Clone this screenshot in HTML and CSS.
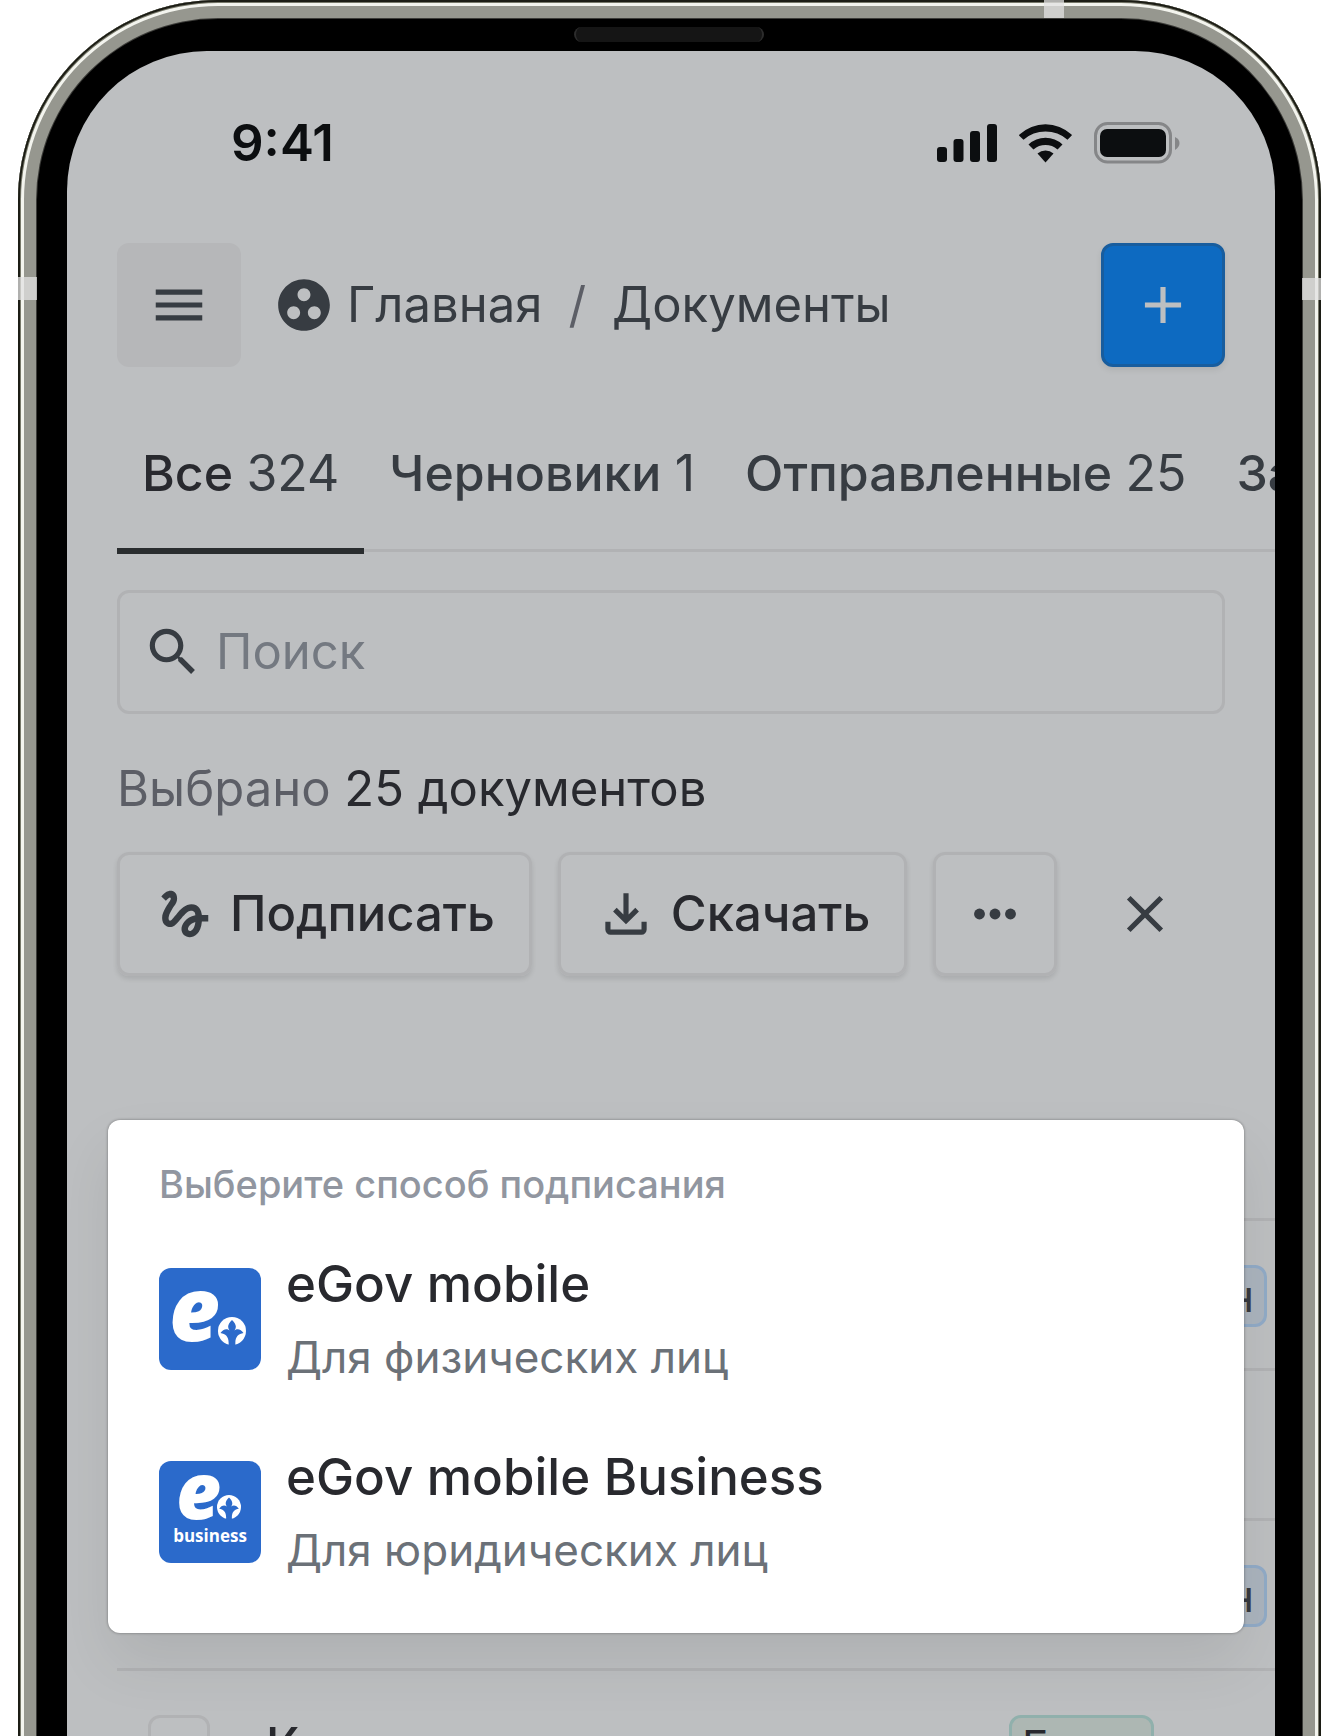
FILE: index.html
```html
<!DOCTYPE html>
<html lang="ru">
<head>
<meta charset="utf-8">
<meta name="viewport" content="width=device-width, initial-scale=1">
<title>Документы</title>
<link rel="stylesheet" href="styles.css">
</head>
<body>
<svg class="defs" aria-hidden="true">
  <symbol id="ornament" viewBox="-14 -14 28 28">
    <circle r="14" fill="#fff"/>
    <path fill="#2b6acb" d="M0-11C4-7 5-4 2.500-.5 5-3 9-2 11.500 2 6 3 2.500 6 3.500 15H-3.500C-2.500 6-6 3-11.500 2-9-2-5-3-2.500-.5-5-4-4-7 0-11Z"/>
  </symbol>
</svg>
<div class="phone">
  <span class="antenna antenna-top"></span>
  <span class="antenna antenna-left"></span>
  <span class="antenna antenna-right"></span>
  <span class="speaker"></span>
  <div class="screen">
    <div class="status">
      <time class="clock">9:41</time>
      <div class="status-icons">
        <svg width="60" height="40" viewBox="0 0 60 40" fill="#0c0e10">
          <rect x="0" y="24" width="10" height="15" rx="3"/>
          <rect x="16.500" y="16" width="10" height="23" rx="3"/>
          <rect x="33" y="8" width="10" height="31" rx="3"/>
          <rect x="50" y="1" width="10" height="38" rx="3"/>
        </svg>
        <svg width="53" height="40" viewBox="0 0 53 40" fill="#0c0e10">
          <path d="M0 12.500Q0 12 .5 11.500A38 38 0 0 1 52.500 11.500Q53 12 52.700 12.500L48.500 16.800A33 33 0 0 0 4.500 16.800Z"/>
          <path d="M9.500 21.500A25 25 0 0 1 43.500 21.500L38.500 26.500A18.500 18.500 0 0 0 14.500 26.500Z"/>
          <path d="M18.500 30.500A12.500 12.500 0 0 1 34.500 30.500L26.500 39.500Z"/>
        </svg>
        <svg width="86" height="42" viewBox="0 0 86 42">
          <rect x="1.500" y="1.500" width="75" height="38.500" rx="12" fill="none" stroke="#858688" stroke-width="3"/>
          <rect x="6" y="7" width="66" height="28" rx="7" fill="#0c0e10"/>
          <path d="M81 15Q85.500 17 85.500 21T81 28Z" fill="#858688"/>
        </svg>
      </div>
    </div>

    <header class="header">
      <button class="icon-button menu" type="button" aria-label="Меню">
        <svg class="icon" viewBox="0 0 24 24"><path d="M3 18h18v-2H3v2zm0-5h18v-2H3v2zm0-7v2h18V6H3z"/></svg>
      </button>
      <nav class="crumbs">
        <a href="#home"><svg class="icon" viewBox="0 0 24 24"><path d="M12 2C6.480 2 2 6.480 2 12s4.480 10 10 10 10-4.480 10-10S17.520 2 12 2zM8 17.500c-1.380 0-2.500-1.120-2.500-2.500s1.120-2.500 2.500-2.500 2.500 1.120 2.500 2.500-1.120 2.500-2.500 2.500zM9.500 8c0-1.380 1.120-2.500 2.500-2.500s2.500 1.120 2.500 2.500-1.120 2.500-2.500 2.500S9.500 9.380 9.500 8zm6.500 9.500c-1.380 0-2.500-1.120-2.500-2.500s1.120-2.500 2.500-2.500 2.500 1.120 2.500 2.500-1.120 2.500-2.500 2.500z"/></svg>Главная</a>
        <span class="slash">/</span>
        <a href="#documents">Документы</a>
      </nav>
      <button class="icon-button add" type="button" aria-label="Добавить">
        <svg class="icon" viewBox="0 0 24 24"><path d="M19 13h-6v6h-2v-6H5v-2h6V5h2v6h6v2z"/></svg>
      </button>
    </header>

    <nav class="tabs">
      <a class="tab active" href="#all">Все <span class="count">324</span></a>
      <a class="tab" href="#drafts">Черновики <span class="count">1</span></a>
      <a class="tab" href="#sent">Отправленные <span class="count">25</span></a>
      <a class="tab" href="#done">Завершенные</a>
    </nav>

    <label class="search">
      <svg class="icon" viewBox="0 0 24 24"><path d="M15.500 14h-.79l-.28-.27C15.410 12.590 16 11.110 16 9.500 16 5.910 13.090 3 9.500 3S3 5.910 3 9.500 5.910 16 9.500 16c1.610 0 3.090-.59 4.230-1.570l.27.28v.79l5 4.990L20.490 19l-4.990-5zm-6 0C7.010 14 5 11.990 5 9.500S7.010 5 9.500 5 14 7.010 14 9.500 11.990 14 9.500 14z"/></svg>
      <input type="search" placeholder="Поиск" aria-label="Поиск">
    </label>

    <p class="selected">Выбрано <span>25 документов</span></p>

    <div class="actions">
      <button class="action" type="button">
        <svg class="icon" viewBox="0 0 24 24"><path d="M4.590 6.890c.7-.71 1.400-1.350 1.710-1.220.5.2 0 1.030-.3 1.520-.25.42-2.860 3.890-2.860 6.310 0 1.280.48 2.340 1.340 2.980.75.56 1.740.73 2.640.46 1.070-.31 1.950-1.400 3.060-2.770 1.210-1.490 2.830-3.440 4.080-3.440 1.630 0 1.650 1.010 1.760 1.790-3.780.64-5.380 3.670-5.380 5.370 0 1.700 1.440 3.090 3.210 3.090 1.630 0 4.290-1.330 4.690-6.100H21v-2.500h-2.470c-.15-1.650-1.090-4.200-4.030-4.200-2.250 0-4.180 1.910-4.940 2.840-.58.73-2.060 2.480-2.290 2.720-.25.3-.68.84-1.110.84-.45 0-.72-.83-.36-1.920.35-1.090 1.400-2.860 1.850-3.520.78-1.140 1.300-1.920 1.300-3.280C8.950 3.690 7.310 3 6.440 3 5.120 3 3.970 4 3.720 4.250c-.36.36-.66.66-.88.93l1.750 1.710zm9.290 11.660c-.31 0-.74-.26-.74-.72 0-.6.73-2.200 2.870-2.760-.3 2.690-1.430 3.480-2.130 3.480z"/></svg>Подписать
      </button>
      <button class="action" type="button">
        <svg class="icon" viewBox="0 0 24 24"><path d="M12 16l-5-5 1.400-1.450 2.600 2.600V4h2v8.150l2.600-2.600L17 11l-5 5zm-6 4q-.83 0-1.410-.59T4 18v-3h2v3h12v-3h2v3q0 .83-.59 1.410T18 20H6z"/></svg>Скачать
      </button>
      <button class="icon-button more" type="button" aria-label="Ещё">
        <svg class="icon" viewBox="0 0 24 24"><circle cx="6" cy="12" r="2.100"/><circle cx="12" cy="12" r="2.100"/><circle cx="18" cy="12" r="2.100"/></svg>
      </button>
      <button class="icon-button close" type="button" aria-label="Закрыть">
        <svg class="icon" viewBox="0 0 24 24"><path d="M19 6.410L17.590 5 12 10.590 6.410 5 5 6.410 10.590 12 5 17.590 6.410 19 12 13.410 17.590 19 19 17.590 13.410 12z"/></svg>
      </button>
    </div>

    <table class="documents">
      <tbody>
        <tr><td class="check"></td><td></td><td><span class="badge signed">Подписан</span></td></tr>
        <tr><td class="check"></td><td></td><td></td></tr>
        <tr><td class="check"></td><td></td><td><span class="badge signed">Подписан</span></td></tr>
        <tr><td class="check"><input type="checkbox" aria-label="Выбрать документ"></td><td>Контракт</td><td><span class="badge ready">Готов</span></td></tr>
      </tbody>
    </table>

    <dialog class="sheet" open aria-labelledby="sheet-title">
      <h2 id="sheet-title">Выберите способ подписания</h2>
      <button class="option" type="button">
        <svg class="logo" viewBox="0 0 102 102">
          <rect width="102" height="102" rx="12" fill="#2b6acb"/>
          <text class="logo-letter" x="10" y="73" font-size="88">e</text>
          <use href="#ornament" x="59" y="49" width="28" height="28"/>
        </svg>
        <span class="option-text"><strong>eGov mobile</strong><small>Для физических лиц</small></span>
      </button>
      <button class="option" type="button">
        <svg class="logo" viewBox="0 0 102 102">
          <rect width="102" height="102" rx="12" fill="#2b6acb"/>
          <text class="logo-letter" x="17" y="58" font-size="78">e</text>
          <use href="#ornament" x="58" y="34" width="24" height="24"/>
          <text class="logo-word" x="51" y="81" font-size="17" text-anchor="middle">business</text>
        </svg>
        <span class="option-text"><strong>eGov mobile Business</strong><small>Для юридических лиц</small></span>
      </button>
    </dialog>
  </div>
</div>
</body>
</html>
```
FILE: styles.css
```css
* { box-sizing: border-box; }

body {
  margin: 0;
  height: 100vh;
  overflow: hidden;
  background: #fff;
  font: 400 49px/62px Inter, "Noto Sans", sans-serif;
  color: #373c42;
}

a { color: inherit; text-decoration: none; }

button {
  margin: 0;
  padding: 0;
  border: 0;
  background: none;
  font: inherit;
  color: inherit;
}

.defs { position: absolute; width: 0; height: 0; }

/* Device */
.phone {
  position: relative;
  height: calc(100vh + 60px);
  margin: 0 17px 0 18px;
  padding: 51px 46px 0 49px;
  border-radius: 200px 200px 0 0;
  background: #000;
  box-shadow:
    inset 0 0 0 2px #1c1d15,
    inset 0 0 0 3px #77786a,
    inset 0 0 0 6px #f3f4ee,
    inset 0 0 0 18px #96978f,
    inset 0 0 0 19px #3c3c39;
}

.antenna {
  position: absolute;
  background: rgba(225, 225, 225, .75);
}
.antenna-top { top: 0; right: 257px; width: 20px; height: 18px; }
.antenna-left { top: 277px; left: 0; width: 19px; height: 23px; }
.antenna-right { top: 278px; right: 0; width: 19px; height: 22px; }

.speaker {
  position: absolute;
  top: 27px;
  left: 50%;
  width: 190px;
  height: 15px;
  margin-left: -96px;
  border: solid #2c2c2c;
  border-width: 0 2px;
  border-radius: 8px;
  background: #151515;
}

.screen {
  position: relative;
  height: 100%;
  overflow: hidden;
  border-radius: 140px 140px 0 0;
  background: #bdbfc1;
}

/* Status bar */
.status {
  display: flex;
  align-items: center;
  justify-content: space-between;
  height: 184px;
  padding: 0 95px 0 164px;
}
.clock { font-size: 51px; font-weight: 600; color: #0c0e10; }
.status-icons { display: flex; align-items: center; gap: 22px; }
.status-icons svg { display: block; }

/* Header */
.header {
  display: flex;
  align-items: center;
  padding: 8px 50px 0;
}

.icon { flex: none; width: 62px; height: 62px; fill: currentColor; }

.icon-button {
  display: flex;
  flex: none;
  align-items: center;
  justify-content: center;
  width: 124px;
  height: 124px;
  border-radius: 12px;
}
.menu { background: #b6b7b9; }
.add {
  margin-left: auto;
  border: 3px solid #185d9e;
  background: #0d6ac1;
  color: #bdbfc1;
  box-shadow: 0 3px 6px rgba(0, 0, 0, .08);
}

.crumbs { display: flex; margin-left: 32px; gap: 26px; }
.crumbs a { display: flex; gap: 12px; }
.slash { color: #5c5e66; }

/* Tabs */
.tabs {
  display: flex;
  margin: 75px 0 0 50px;
  border-bottom: 3px solid #b1b2b4;
  font-size: 50px;
}
.tab {
  flex: none;
  margin-bottom: -5px;
  padding: 0 25px 44px;
  border-bottom: 6px solid transparent;
  font-weight: 500;
}
.tab.active { border-color: #2a2d2f; color: #28292e; }
.count { font-weight: 400; color: #373c42; }

/* Search */
.search {
  display: flex;
  align-items: center;
  gap: 12px;
  height: 124px;
  margin: 38px 50px 0;
  padding: 0 22px;
  border: 3px solid #b1b2b4;
  border-radius: 12px;
}
.search input {
  flex: 1;
  min-width: 0;
  padding: 0;
  border: 0;
  outline: 0;
  background: none;
  font: inherit;
  color: inherit;
}
.search input::placeholder { color: #747981; opacity: 1; }

/* Selection */
.selected { margin: 44px 50px 0; color: #5c5e66; }
.selected span { color: #28292e; }

.actions { display: flex; gap: 26px; margin: 32px 50px 0; }
.action {
  display: flex;
  align-items: center;
  gap: 14px;
  height: 124px;
  padding: 0 34px;
  font-weight: 500;
  color: #28292e;
}
.action .icon { fill: #373c42; }
.action, .more {
  border: 3px solid #b1b2b4;
  border-radius: 12px;
  box-shadow: 0 3px 5px rgba(0, 0, 0, .1);
}

/* Documents */
.documents {
  width: calc(100% - 50px);
  margin: 242px 0 0 50px;
  border-collapse: collapse;
  table-layout: fixed;
}
.documents tr { height: 150px; border-top: 3px solid #b1b2b4; }
.documents td {
  padding: 44px 0 0;
  font-weight: 500;
  color: #28292e;
  vertical-align: top;
}
.documents .check { width: 149px; padding-left: 31px; }
.documents td:last-child { width: 266px; padding-right: 8px; }
.documents input {
  display: block;
  appearance: none;
  width: 62px;
  height: 62px;
  margin: 0;
  border: 3px solid #b1b2b4;
  border-radius: 12px;
}
.badge {
  display: block;
  width: fit-content;
  height: 62px;
  padding: 0 10px;
  border: 3px solid;
  border-radius: 12px;
  font-size: 44px;
  font-weight: 400;
  line-height: 56px;
}
.signed { margin-left: auto; border-color: #91abc7; background: #abb4be; color: #373a40; }
.ready { border-color: #90b0ac; background: #adb7b3; }

/* Signing method dialog */
.sheet {
  position: absolute;
  inset: 1069px 31px auto 41px;
  width: auto;
  margin: 0;
  padding: 39px 51px 55px;
  border: 0;
  border-radius: 12px;
  background: #fff;
  box-shadow: 0 0 3px rgba(0, 0, 0, .4), 0 30px 60px rgba(0, 0, 0, .08);
}
.sheet h2 {
  margin: 0 0 44px;
  font-size: 38px;
  font-weight: 500;
  line-height: 50px;
  color: #9196a0;
}
.option {
  display: flex;
  align-items: center;
  gap: 25px;
  width: 100%;
  text-align: left;
}
.option + .option { margin-top: 61px; }
.logo { flex: none; width: 102px; height: 102px; }
.logo-letter { font-family: "Open Sans", sans-serif; font-style: italic; font-weight: 800; fill: #fff; }
.logo-word { font-family: "Open Sans", sans-serif; font-weight: 700; fill: #fff; }
.option-text { display: flex; flex-direction: column; gap: 14px; }
.option strong { font-size: 51px; font-weight: 500; color: #28292e; }
.option small { font-size: 44px; line-height: 56px; color: #6b7178; }
```
